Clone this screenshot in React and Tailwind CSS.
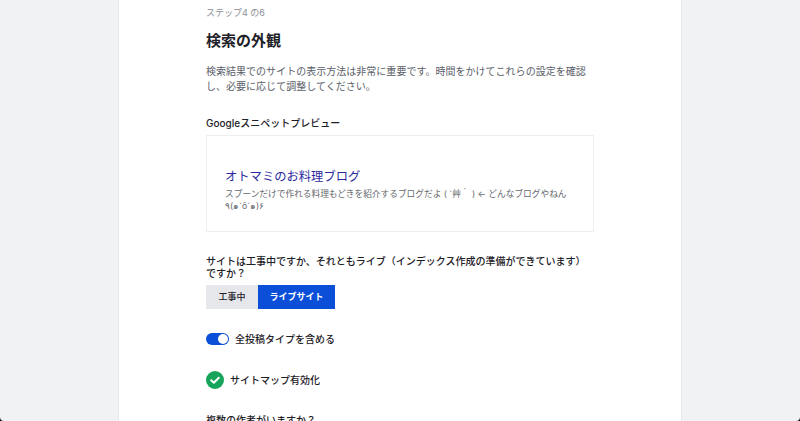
const jp = "font-['Inter','Noto_Sans_CJK_JP',sans-serif]"

const App = () => {
  return (
    <div className="h-[421px] w-[800px] overflow-hidden bg-black">
      <div className={`flex h-[421px] justify-center overflow-hidden rounded-b-[4px] bg-[#f0f2f3] ${jp}`}>
        <div className="h-[421px] w-[564px] shrink-0 overflow-hidden border-x border-[#e6e8e8] bg-white px-[87px] pt-[6px]">
          <p className="text-[9px] leading-[13px] text-[#8a8f96]">ステップ4 の6</p>
          <h1 className="mt-[11px] text-[15px] font-bold leading-[22px] text-[#1d2026]">検索の外観</h1>

          <p className="mt-[12px] text-[10px] leading-[15px] tracking-[0.02px] text-[#5a6069]">
            検索結果でのサイトの表示方法は非常に重要です。時間をかけてこれらの設定を確認し、必要に応じて調整してください。
          </p>

          <p className="mt-[22px] text-[10px] font-medium leading-[14px] text-[#1d2026]">Googleスニペットプレビュー</p>

          {/* Snippet preview */}
          <div className="mt-[5px] h-[97px] border border-[#eceeef] px-[18px] pt-[32px]">
            <p className="text-[12.3px] leading-[18px] text-[#2b2a9e]">オトマミのお料理ブログ</p>
            <p className="mt-[2px] text-[8.7px] leading-[12px] text-[#63676c]">
              スプーンだけで作れる料理もどきを紹介するブログだよ ( ´艸｀ ) ← どんなブログやねん ٩(๑`ȏ´๑)۶
            </p>
          </div>

          <p className="mt-[23px] text-[10px] font-medium leading-[12px] text-[#1d2026]">
            サイトは工事中ですか、それともライブ（インデックス作成の準備ができています）ですか？
          </p>

          <div className="mt-[6px] flex h-[24px] text-[9px] font-bold">
            <button className="w-[52px] bg-[#e5e7eb] font-medium text-[#1d2026]">工事中</button>
            <button className="w-[77px] bg-[#0b4fd8] text-white">ライブサイト</button>
          </div>

          <div className="mt-[23px] flex items-center gap-[6px]">
            <span className="flex h-[12px] w-[23px] items-center justify-end rounded-full bg-[#0b4fd8] pr-[1px]">
              <span className="h-[10px] w-[10px] rounded-full bg-white" />
            </span>
            <span className="text-[10px] font-medium leading-[14px] text-[#1d2026]">全投稿タイプを含める</span>
          </div>

          <div className="mt-[25px] flex items-center gap-[6px]">
            <svg className="h-[18px] w-[18px]" viewBox="0 0 18 18" fill="none">
              <circle cx="9" cy="9" r="9" fill="#16a35a" />
              <path d="M5.2 9.3l2.6 2.5 5-5" stroke="#fff" strokeWidth="2" strokeLinecap="round" strokeLinejoin="round" />
            </svg>
            <span className="text-[10px] font-medium leading-[14px] text-[#1d2026]">サイトマップ有効化</span>
          </div>

          <p className="mt-[24px] text-[10px] font-medium leading-[14px] text-[#1d2026]">複数の作者がいますか？</p>
        </div>
      </div>
    </div>
  )
}

export default App
